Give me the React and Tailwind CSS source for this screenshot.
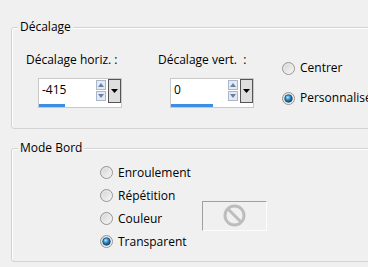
import { useState } from "react";

const Radio = ({ checked }) => (
  <svg width="13" height="13" viewBox="0 0 13 13" className="shrink-0">
    <defs>
      <linearGradient id="rfill" x1="0" y1="0" x2="1" y2="1">
        <stop offset="0" stopColor="#cfcfcf" />
        <stop offset="1" stopColor="#fbfbfb" />
      </linearGradient>
      <radialGradient id="rdot" cx="0.4" cy="0.35" r="0.7">
        <stop offset="0" stopColor="#b9ecff" />
        <stop offset="0.45" stopColor="#2d8fcf" />
        <stop offset="1" stopColor="#0b3658" />
      </radialGradient>
    </defs>
    <circle cx="6.5" cy="6.5" r="6" fill="url(#rfill)" stroke="#959595" />
    <circle cx="6.5" cy="6.5" r="4.6" fill="none" stroke="#ececec" />
    {checked && (
      <circle cx="6.5" cy="6.5" r="3.8" fill="url(#rdot)" stroke="#1c4a70" strokeWidth="0.8" />
    )}
  </svg>
);

const Arrow = ({ up }) => (
  <div className="h-[10px] w-[10px] flex items-center justify-center border border-[#a9b7cb] bg-[#e4eaf3]">
    <svg width="6" height="4" viewBox="0 0 6 4">
      <path d={up ? "M0 4 L3 0 L6 4 Z" : "M0 0 L3 4 L6 0 Z"} fill="#6a80a3" />
    </svg>
  </div>
);

const SpinBox = ({ value, bar }) => (
  <div className="w-[84px] h-[30px] border border-[#c9c9c9] bg-white flex flex-col">
    <div className="flex h-[24px]">
      <div className="flex-1 pl-[3px] leading-[22px]">{value}</div>
      <div className="flex flex-col gap-[1px] pt-[1px] w-[10px]">
        <Arrow up />
        <Arrow />
      </div>
      <div className="w-[13px] ml-[2px] border border-[#555555] bg-[#dedede] flex items-center justify-center">
        <svg width="7" height="4" viewBox="0 0 7 4">
          <path d="M0 0 L3.5 4 L7 0 Z" fill="#000" />
        </svg>
      </div>
    </div>
    <div className="h-[3px] mt-[1px] bg-[#3b8ee4]" style={{ width: bar }} />
  </div>
);

const Group = ({ title, className, children }) => (
  <div
    className={`relative ml-[11px] w-[380px] border border-[#d3d3d3] rounded-[3px] shadow-[inset_1px_1px_0_#ffffff] ${className}`}
  >
    <span className="absolute left-[6px] top-[-9px] px-[2px] bg-[#f0f0f0] leading-[16px]">
      {title}
    </span>
    {children}
  </div>
);

export default function App() {
  const [decalage, setDecalage] = useState("perso");
  const [bord, setBord] = useState("transparent");

  const modes = [
    { id: "enroulement", label: "Enroulement" },
    { id: "repetition", label: "Répétition" },
    { id: "couleur", label: "Couleur" },
    { id: "transparent", label: "Transparent" },
  ];

  return (
    <div className="w-[368px] h-[267px] overflow-hidden bg-[#f0f0f0] pt-[27px] font-['Open_Sans',sans-serif] text-[12px] text-black">
      <Group title="Décalage" className="h-[102px]">
        <div className="flex pl-[14px] pt-[24px]">
          <div className="w-[132px]">
            <div className="leading-[16px]">Décalage horiz. :</div>
            <div className="mt-[10px] ml-[12px]">
              <SpinBox value="-415" bar={26} />
            </div>
          </div>
          <div className="w-[124px]">
            <div className="leading-[16px]">Décalage vert.&nbsp; :</div>
            <div className="mt-[10px] ml-[12px]">
              <SpinBox value="0" bar={42} />
            </div>
          </div>
          <div className="flex flex-col gap-[14px] pt-[8px]">
            <div
              className="flex items-center gap-[5px] h-[16px] whitespace-nowrap"
              onClick={() => setDecalage("centrer")}
            >
              <Radio checked={decalage === "centrer"} />
              <span>Centrer</span>
            </div>
            <div
              className="flex items-center gap-[5px] h-[16px] whitespace-nowrap"
              onClick={() => setDecalage("perso")}
            >
              <Radio checked={decalage === "perso"} />
              <span>Personnalisé</span>
            </div>
          </div>
        </div>
      </Group>

      <Group title="Mode Bord" className="h-[114px] mt-[19px]">
        <div className="flex flex-col pl-[88px] pt-[12px]">
          {modes.map((m) => (
            <div
              key={m.id}
              className="flex items-center gap-[5px] h-[23px]"
              onClick={() => setBord(m.id)}
            >
              <Radio checked={bord === m.id} />
              <span className="w-[79px]">{m.label}</span>
              {m.id === "couleur" && (
                <div className="w-[65px] h-[30px] mb-[6px] flex items-center justify-center border border-t-[#a0a0a0] border-l-[#a0a0a0] border-r-[#fcfcfc] border-b-[#fcfcfc]">
                  <svg width="23" height="23" viewBox="0 0 23 23">
                    <circle cx="11.5" cy="11.5" r="9.5" fill="none" stroke="#bdbdbd" strokeWidth="3" />
                    <path d="M5 5 L18 18" stroke="#bdbdbd" strokeWidth="3" />
                  </svg>
                </div>
              )}
            </div>
          ))}
        </div>
      </Group>
    </div>
  );
}
